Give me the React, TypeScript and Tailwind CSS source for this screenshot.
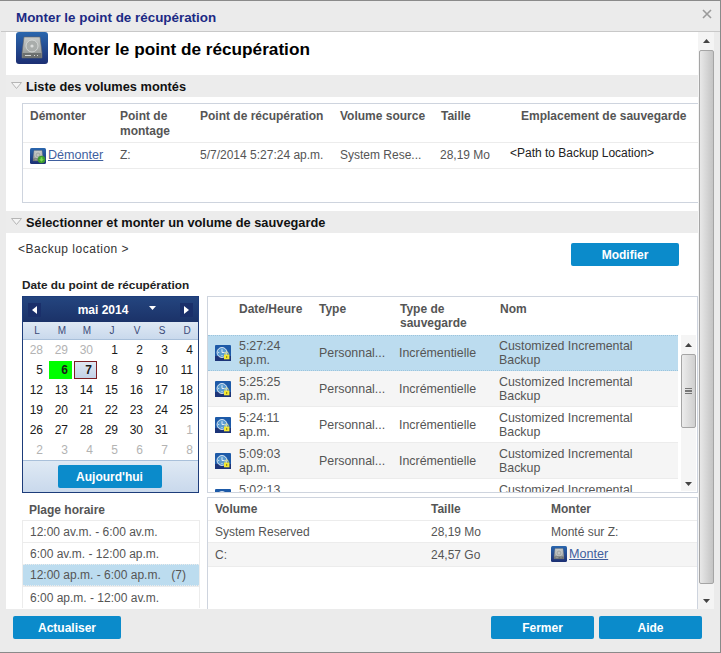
import type { ReactNode } from 'react';

function DriveIcon({ size, badge }: { size: number; badge?: boolean }) {
  return (
    <svg width={size} height={size} viewBox="0 0 32 32" className="shrink-0">
      <defs>
        <linearGradient id="driveBg" x1="0" y1="0" x2="0" y2="1">
          <stop offset="0" stopColor="#2a66ad" />
          <stop offset="1" stopColor="#1c2f73" />
        </linearGradient>
        <linearGradient id="driveBody" x1="0" y1="0" x2="0" y2="1">
          <stop offset="0" stopColor="#c9ccca" />
          <stop offset="1" stopColor="#8d918f" />
        </linearGradient>
      </defs>
      <rect x="0" y="0" width="32" height="32" rx="3" fill="url(#driveBg)" />
      <path d="M8 5h16l2 16v5H6v-5z" fill="url(#driveBody)" stroke="#666" strokeWidth="0.6" />
      <circle cx="16" cy="14" r="6" fill="#a9adab" stroke="#dcdedd" strokeWidth="0.8" />
      <circle cx="16" cy="14" r="1.6" fill="#dcdedd" />
      <rect x="6.5" y="21" width="19" height="5" fill="#6d7170" />
      <path d="M9 23.5h6M18 23.5h1M21 23.5h1" stroke="#d6d8d7" strokeWidth="1" />
      {badge && (
        <g>
          <circle cx="23" cy="23" r="7.5" fill="#3e9a2f" />
          <path d="M23 27.5l-4.6-5h2.8v-4h3.6v4h2.8z" fill="#7bdc4c" />
        </g>
      )}
    </svg>
  );
}

function ClockLockIcon() {
  return (
    <svg width="16" height="16" viewBox="0 0 16 16" className="shrink-0">
      <rect width="16" height="16" rx="1" fill="#1d5aa8" />
      <rect y="11" width="16" height="5" fill="#1c3478" />
      <circle cx="7" cy="7.5" r="5" fill="#5a9bd0" stroke="#fff" strokeWidth="0.8" />
      <path d="M7 4.2v3.3h2.6M3.2 7.5h1M7 10v1" stroke="#fff" strokeWidth="0.8" fill="none" />
      <path d="M10.2 9.5V8.4a1.5 1.5 0 0 1 3 0v1.1" stroke="#f4ee8c" strokeWidth="0.9" fill="none" />
      <rect x="9" y="9.5" width="5.4" height="4.8" fill="#f3e834" />
      <rect x="11.2" y="11" width="1" height="2" fill="#8a7f10" />
    </svg>
  );
}

function Button({ children, className }: { children: ReactNode; className: string }) {
  return (
    <div className={`flex h-[23px] items-center justify-center rounded-[2px] bg-[#0b8bcb] text-[12px] font-bold text-white ${className}`}>
      {children}
    </div>
  );
}

function SectionHeader({ title }: { title: string }) {
  return (
    <div className="flex h-[22px] items-center bg-[#ececec] pt-[1px] pl-[5px]">
      <svg width="11" height="7" viewBox="0 0 11 7" className="mr-[4px] mb-[3px]">
        <path d="M0.5 0.5h10L5.5 6.5z" fill="#f4f4f4" stroke="#b5b5b5" />
      </svg>
      <span className="text-[12.8px] font-bold text-[#111]">{title}</span>
    </div>
  );
}

function ScrollArrow({ up }: { up?: boolean }) {
  return (
    <svg width="7" height="4" viewBox="0 0 7 4">
      <path d={up ? 'M3.5 0L7 4H0z' : 'M0 0h7L3.5 4z'} fill="#444" />
    </svg>
  );
}

const calendar = [
  ['28', '29', '30', '1', '2', '3', '4'],
  ['5', '6', '7', '8', '9', '10', '11'],
  ['12', '13', '14', '15', '16', '17', '18'],
  ['19', '20', '21', '22', '23', '24', '25'],
  ['26', '27', '28', '29', '30', '31', '1'],
  ['2', '3', '4', '5', '6', '7', '8'],
];

function Calendar() {
  return (
    <div className="w-[177px] border border-[#1d3c7a] bg-white">
      <div className="flex h-[25px] items-center justify-between bg-gradient-to-b from-[#24457f] to-[#1b3268] px-[5px]">
        <div className="flex h-[14px] w-[13px] items-center justify-center bg-[#1a2f6a]">
          <svg width="5" height="8" viewBox="0 0 5 8"><path d="M5 0v8L0 4z" fill="#fff" /></svg>
        </div>
        <div className="flex items-center">
          <span className="ml-[13px] text-[12px] font-bold text-white">mai 2014</span>
          <svg width="7" height="4" viewBox="0 0 7 4" className="mb-[3px] ml-[21px]"><path d="M0 0h7L3.5 4z" fill="#fff" /></svg>
        </div>
        <div className="flex h-[14px] w-[13px] items-center justify-center bg-[#1a2f6a]">
          <svg width="5" height="8" viewBox="0 0 5 8"><path d="M0 0v8l5-4z" fill="#fff" /></svg>
        </div>
      </div>
      <div className="grid h-[18px] grid-cols-7 items-center border-b border-[#a9c0da] bg-gradient-to-b from-[#dfe9f4] to-[#c9d9ec] text-[10px] text-[#3b4a78]">
        {['L', 'M', 'M', 'J', 'V', 'S', 'D'].map((d, i) => (
          <div key={i} className="pl-[3px] text-center">{d}</div>
        ))}
      </div>
      <div className="grid grid-cols-7">
        {calendar.flat().map((d, i) => {
          const muted = i < 3 || i >= 34;
          const isGreen = i === 8;
          const isToday = i === 9;
          return (
            <div key={i} className="flex h-[20px] items-center justify-center text-[12px]">
              <div
                className={`flex h-[18px] w-[23px] items-center justify-end pr-[4px] ${
                  muted ? 'text-[#b3b3b3]' : 'text-[#1a1a1a]'
                } ${isGreen ? 'bg-[#00ff00] font-bold' : ''} ${
                  isToday ? 'border border-[#7d1e24] bg-gradient-to-b from-[#dfe7f3] to-[#c3d2e8] font-bold' : ''
                }`}
              >
                {d}
              </div>
            </div>
          );
        })}
      </div>
      <div className="flex h-[32px] items-center justify-center border-t border-[#a9c0da] bg-gradient-to-b from-[#dfe9f4] to-[#c9d9ec] pr-[2px]">
        <Button className="w-[104px]">Aujourd'hui</Button>
      </div>
    </div>
  );
}

const points = ['5:27:24', '5:25:25', '5:24:11', '5:09:03', '5:02:13'];

function PointsTable() {
  return (
    <div className="h-[197px] shrink-0 overflow-hidden border border-[#ced4de] bg-white text-[12.4px] leading-[14px] text-[#555]">
      <div className="flex h-[38px] pt-[5px] text-[12px] font-bold text-[#555]">
        <div className="w-[31px]" />
        <div className="w-[80px]">Date/Heure</div>
        <div className="w-[81px]">Type</div>
        <div className="w-[100px]">Type de<br />sauvegarde</div>
        <div>Nom</div>
      </div>
      <div className="relative h-[158px] overflow-hidden">
        {points.map((time, i) => (
          <div
            key={time}
            className={`flex h-[36px] w-[470px] items-center border-b border-[#ececec] ${
              i === 0 ? 'border-y border-dotted border-y-[#9cc4dc] bg-[#bcdcef]' : i % 2 === 1 ? 'bg-[#f5f5f5]' : 'bg-white'
            }`}
          >
            <div className="flex w-[31px] justify-center pr-[2px]"><ClockLockIcon /></div>
            <div className="w-[80px]">{time}<br />ap.m.</div>
            <div className="w-[80px]">Personnal...</div>
            <div className="w-[100px]">Incrémentielle</div>
            <div className="w-[160px]">Customized Incremental Backup</div>
          </div>
        ))}
        <div className="absolute top-0 right-[1px] flex h-[156px] w-[15px] flex-col items-center bg-[#f5f5f5]">
          <div className="flex h-[19px] items-center"><ScrollArrow up /></div>
          <div className="flex h-[74px] w-[15px] items-center justify-center rounded-[2px] border border-[#a5a5a5] bg-gradient-to-r from-[#ececec] to-[#cfcfcf]">
            <div className="h-[6px] w-[7px] border-y-[3px] border-double border-[#777]" />
          </div>
          <div className="flex-1" />
          <div className="flex h-[14px] items-center"><ScrollArrow /></div>
        </div>
      </div>
    </div>
  );
}

function VolumesTable() {
  return (
    <div className="flex-1 border-x border-t border-[#ced4de] bg-white text-[12px] text-[#555]">
      <div className="flex h-[22px] items-center pl-[7px] font-bold">
        <div className="w-[216px]">Volume</div>
        <div className="w-[120px]">Taille</div>
        <div>Monter</div>
      </div>
      <div className="flex h-[23px] items-center border-y border-[#ececec] pl-[7px]">
        <div className="w-[216px]">System Reserved</div>
        <div className="w-[120px]">28,19 Mo</div>
        <div>Monté sur Z:</div>
      </div>
      <div className="flex h-[24px] items-center border-b border-[#ececec] bg-[#f5f5f5] pl-[7px]">
        <div className="w-[216px]">C:</div>
        <div className="w-[120px]">24,57 Go</div>
        <div className="flex items-center gap-[2px]">
          <DriveIcon size={16} />
          <span className="text-[12.6px] text-[#3f5f9f] underline">Monter</span>
        </div>
      </div>
    </div>
  );
}

const ranges = ['12:00 av.m. - 6:00 av.m.', '6:00 av.m. - 12:00 ap.m.', '12:00 ap.m. - 6:00 ap.m.', '6:00 ap.m. - 12:00 av.m.'];

export default function App() {
  return (
    <div className="flex h-[653px] w-[721px] flex-col overflow-hidden border-t border-r border-b border-t-[#8a8a8a] border-r-[#8a8a8a] border-b-[#8a8a8a] bg-[#ebebeb] pl-[1px] font-['Liberation_Sans',Arial,sans-serif]">
      <div className="relative flex h-[31px] shrink-0 items-center border-b border-[#c8c8c8] pt-[4px] pl-[15px]">
        <span className="text-[13.4px] font-bold text-[#1b2a84]">Monter le point de récupération</span>
        <svg width="10" height="10" viewBox="0 0 10 10" className="absolute top-[8px] right-[8px]">
          <path d="M1 1l8 8M9 1l-8 8" stroke="#9a9a9a" strokeWidth="1.6" />
        </svg>
      </div>

      <div className="flex min-h-0 flex-1 pl-[5px]">
        <div className="flex w-[692px] flex-col overflow-hidden bg-white">
          <div className="flex h-[43px] shrink-0 items-start pl-[10px]">
            <DriveIcon size={32} />
            <h1 className="mt-[7px] ml-[5px] text-[17.2px] leading-[20px] font-bold text-black">Monter le point de récupération</h1>
          </div>

          <SectionHeader title="Liste des volumes montés" />

          <div className="mt-[6px] ml-[16px] h-[100px] shrink-0 border-y border-l border-[#ced4de] text-[12px] leading-[15px] text-[#555]">
            <div className="flex h-[38px] pt-[5px] font-bold">
              <div className="w-[97px] pl-[7px]">Démonter</div>
              <div className="w-[80px]">Point de<br />montage</div>
              <div className="w-[140px]">Point de récupération</div>
              <div className="w-[101px]">Volume source</div>
              <div className="w-[80px]">Taille</div>
              <div>Emplacement de sauvegarde</div>
            </div>
            <div className="flex h-[27px] items-center border-y border-[#ececec]">
              <div className="flex w-[97px] items-center gap-[2px] pl-[7px]">
                <DriveIcon size={16} badge />
                <span className="text-[12.6px] text-[#3f5f9f] underline">Démonter</span>
              </div>
              <div className="w-[80px]">Z:</div>
              <div className="w-[140px]">5/7/2014 5:27:24 ap.m.</div>
              <div className="w-[100px]">System Rese...</div>
              <div className="w-[70px]">28,19 Mo</div>
              <div className="mb-[4px] text-[12px] text-[#222]">&lt;Path to Backup Location&gt;</div>
            </div>
          </div>

          <div className="mt-[8px]"><SectionHeader title="Sélectionner et monter un volume de sauvegarde" /></div>

          <div className="flex h-[33px] shrink-0 justify-between pr-[19px] pl-[12px]">
            <span className="mt-[9px] text-[12px] leading-[14px] tracking-[0.5px] text-[#333]">&lt;Backup location &gt;</span>
            <Button className="mt-[10px] w-[108px]">Modifier</Button>
          </div>

          <div className="flex min-h-0 flex-1 pt-[12px] pl-[16px]">
            <div className="flex w-[185px] shrink-0 flex-col">
              <div className="mb-[4px] text-[11.8px] leading-[14px] font-bold text-[#222]">Date du point de récupération</div>
              <Calendar />
              <div className="mt-[10px] pl-[7px] text-[12px] leading-[14px] font-bold text-[#555]">Plage horaire</div>
              <div className="mt-[3px] w-[178px] border-x border-[#ececec] text-[12px] text-[#555]">
                {ranges.map((r, i) => (
                  <div
                    key={r}
                    className={`flex h-[22px] items-center justify-between border-t border-[#ececec] pr-[13px] pl-[7px] ${
                      i === 2 ? 'border-y border-dotted border-[#9cc4dc] bg-[#bcdcef]' : ''
                    }`}
                  >
                    <span>{r}</span>
                    {i === 2 && <span>(7)</span>}
                  </div>
                ))}
              </div>
            </div>
            <div className="mt-[18px] flex min-w-0 flex-1 flex-col">
              <PointsTable />
              <div className="mt-[4px] flex min-h-0 flex-1 flex-col"><VolumesTable /></div>
            </div>
          </div>
        </div>

        <div className="flex w-[16px] shrink-0 flex-col items-center bg-[#f4f4f4]">
          <div className="flex h-[18px] items-center"><ScrollArrow up /></div>
          <div className="h-[534px] w-[15px] shrink-0 rounded-[2px] border border-[#a5a5a5] bg-gradient-to-r from-[#e8e8e8] to-[#c4c4c4]" />
          <div className="flex flex-1 items-center pt-[8px]"><ScrollArrow /></div>
        </div>
        <div className="w-[6px] shrink-0" />
      </div>

      <div className="ml-[7px] flex h-[43px] shrink-0 items-start justify-between bg-[#ebebeb] pt-[7px] pr-[18px] pl-[5px]">
        <Button className="w-[108px]">Actualiser</Button>
        <div className="flex gap-[5px]">
          <Button className="w-[103px]">Fermer</Button>
          <Button className="w-[103px]">Aide</Button>
        </div>
      </div>
    </div>
  );
}
